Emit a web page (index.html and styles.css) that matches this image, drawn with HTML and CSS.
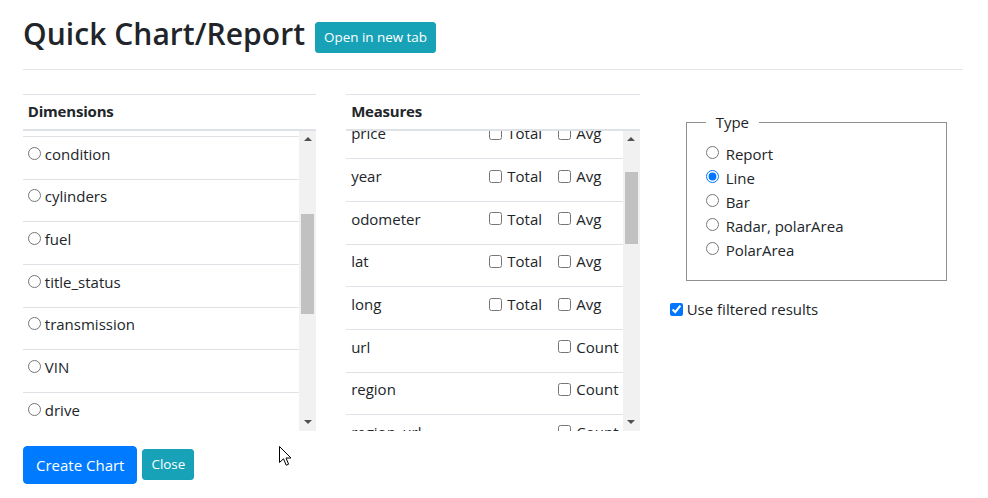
FILE: index.html
```html
<!DOCTYPE html>
<html lang="en">
<head>
<meta charset="utf-8">
<title>Quick Chart/Report</title>
<link rel="stylesheet" href="styles.css">
</head>
<body>
<div class="page">
  <div class="title-row">
    <h2 class="title">Quick Chart/Report</h2>
    <button class="btn btn-info btn-sm btn-open">Open in new tab</button>
  </div>
  <hr class="divider">

  <div class="cols">
    <div class="panel">
      <div class="panel-head">Dimensions</div>
      <div class="scroll">
        <div class="scroll-view">
          <div class="list list-dims">
            <div class="row"><label class="opt"><input type="radio" name="dim"><span>condition</span></label></div>
            <div class="row"><label class="opt"><input type="radio" name="dim"><span>cylinders</span></label></div>
            <div class="row"><label class="opt"><input type="radio" name="dim"><span>fuel</span></label></div>
            <div class="row"><label class="opt"><input type="radio" name="dim"><span>title_status</span></label></div>
            <div class="row"><label class="opt"><input type="radio" name="dim"><span>transmission</span></label></div>
            <div class="row"><label class="opt"><input type="radio" name="dim"><span>VIN</span></label></div>
            <div class="row"><label class="opt"><input type="radio" name="dim"><span>drive</span></label></div>
          </div>
        </div>
        <div class="sbar">
          <div class="sbtn"><span class="arrow-up"></span></div>
          <div class="strack"><div class="sthumb" style="margin-top:66px;height:100px"></div></div>
          <div class="sbtn"><span class="arrow-down"></span></div>
        </div>
      </div>
    </div>

    <div class="panel">
      <div class="panel-head">Measures</div>
      <div class="scroll">
        <div class="scroll-view">
          <div class="list list-measures">
            <div class="row mrow"><span class="cell">price</span><label class="cell opt"><input type="checkbox"><span>Total</span></label><label class="cell opt"><input type="checkbox"><span>Avg</span></label></div>
            <div class="row mrow"><span class="cell">year</span><label class="cell opt"><input type="checkbox"><span>Total</span></label><label class="cell opt"><input type="checkbox"><span>Avg</span></label></div>
            <div class="row mrow"><span class="cell">odometer</span><label class="cell opt"><input type="checkbox"><span>Total</span></label><label class="cell opt"><input type="checkbox"><span>Avg</span></label></div>
            <div class="row mrow"><span class="cell">lat</span><label class="cell opt"><input type="checkbox"><span>Total</span></label><label class="cell opt"><input type="checkbox"><span>Avg</span></label></div>
            <div class="row mrow"><span class="cell">long</span><label class="cell opt"><input type="checkbox"><span>Total</span></label><label class="cell opt"><input type="checkbox"><span>Avg</span></label></div>
            <div class="row mrow"><span class="cell">url</span><span class="cell"></span><label class="cell opt"><input type="checkbox"><span>Count</span></label></div>
            <div class="row mrow"><span class="cell">region</span><span class="cell"></span><label class="cell opt"><input type="checkbox"><span>Count</span></label></div>
            <div class="row mrow"><span class="cell">region_url</span><span class="cell"></span><label class="cell opt"><input type="checkbox"><span>Count</span></label></div>
          </div>
        </div>
        <div class="sbar">
          <div class="sbtn"><span class="arrow-up"></span></div>
          <div class="strack"><div class="sthumb" style="margin-top:24px;height:72px"></div></div>
          <div class="sbtn"><span class="arrow-down"></span></div>
        </div>
      </div>
    </div>

    <div class="panel side">
      <fieldset class="type-box">
        <legend class="type-legend">Type</legend>
        <label class="topt"><input type="radio" name="type"><span>Report</span></label>
        <label class="topt"><input type="radio" name="type" checked><span>Line</span></label>
        <label class="topt"><input type="radio" name="type"><span>Bar</span></label>
        <label class="topt"><input type="radio" name="type"><span>Radar, polarArea</span></label>
        <label class="topt"><input type="radio" name="type"><span>PolarArea</span></label>
      </fieldset>
      <label class="filter"><input type="checkbox" checked><span>Use filtered results</span></label>
    </div>
  </div>

  <div class="actions">
    <button class="btn btn-primary">Create Chart</button>
    <button class="btn btn-info btn-sm">Close</button>
  </div>
</div>

<svg class="cursor" width="13" height="21" viewBox="0 0 13 21" aria-hidden="true">
  <path d="M0.5 0.5 L0.5 16.5 L4.5 12.8 L7.2 19.2 L9.6 18.2 L7 12 L12 12 Z" fill="#ffffff" stroke="#000000" stroke-width="1" stroke-linejoin="miter"/>
</svg>
</body>
</html>
```

FILE: styles.css
```css
* { box-sizing: border-box; }

html, body {
  margin: 0;
  padding: 0;
  background: #ffffff;
}

body {
  font-family: "Open Sans", "Noto Sans", "Liberation Sans", sans-serif;
  font-size: 15px;
  line-height: 24px;
  color: #212529;
  position: relative;
  width: 988px;
  height: 498px;
  overflow: hidden;
}

.page {
  width: 940px;
  margin-left: 23px;
}

.title-row {
  display: flex;
  align-items: flex-start;
  gap: 10px;
  padding-top: 16px;
}

.title {
  margin: 0;
  font-size: 30px;
  line-height: 36px;
  font-weight: 600;
  letter-spacing: 0.05px;
}

.btn-open { margin-top: 6px; }

.btn {
  display: inline-block;
  font-family: inherit;
  font-weight: 400;
  color: #ffffff;
  border: 1px solid transparent;
  border-radius: 4px;
  padding: 6px 12px;
  font-size: 15px;
  line-height: 24px;
  cursor: pointer;
}

.btn-sm {
  padding: 4px 8px;
  font-size: 13.4px;
  line-height: 21px;
  border-radius: 3px;
}

.btn-info {
  background: #17a2b8;
  border-color: #17a2b8;
}

.btn-primary {
  background: #007bff;
  border-color: #007bff;
}

.divider {
  margin: 16px 0 0 0;
  border: 0;
  border-top: 1px solid rgba(0, 0, 0, 0.1);
  height: 0;
}

.cols {
  display: grid;
  grid-template-columns: repeat(3, 1fr);
  column-gap: 30px;
  margin-top: 24px;
}

.panel-head {
  border-top: 1px solid #dee2e6;
  border-bottom: 2px solid #dee2e6;
  padding: 4px 4.8px 5.6px 4.8px;
  font-weight: 700;
  line-height: 24px;
  letter-spacing: -0.2px;
}

.scroll {
  display: flex;
  height: 300px;
}

.scroll-view {
  flex: 1;
  overflow: hidden;
}

.list-dims { padding-top: 5.4px; }
.list-measures { margin-top: -15px; }

.row {
  height: 42.67px;
  border-top: 1px solid #dee2e6;
  padding: 4.8px 4.8px 0 4.8px;
  display: flex;
  align-items: flex-start;
  white-space: nowrap;
}

.mrow {
  display: grid;
  grid-template-columns: 138.2px 69px 1fr;
  padding-left: 0;
  padding-right: 0;
}

.cell {
  padding: 0 4.8px;
  display: flex;
  align-items: center;
  height: 24px;
  overflow: hidden;
}

.opt {
  display: flex;
  align-items: center;
  height: 24px;
}

.opt input {
  margin: 0 4px 1px 0;
  width: 13px;
  height: 13px;
  flex: none;
}

.mrow .opt input {
  margin: 0 5px 0 0;
}

.sbar {
  width: 17px;
  flex: none;
  background: #f1f1f1;
  display: flex;
  flex-direction: column;
}

.sbtn {
  height: 17px;
  flex: none;
  display: flex;
  align-items: center;
  justify-content: center;
}

.arrow-up {
  width: 0;
  height: 0;
  border-left: 4px solid transparent;
  border-right: 4px solid transparent;
  border-bottom: 4px solid #505050;
}

.arrow-down {
  width: 0;
  height: 0;
  border-left: 4px solid transparent;
  border-right: 4px solid transparent;
  border-top: 4px solid #505050;
}

.strack {
  flex: 1;
  display: flex;
  flex-direction: column;
  align-items: center;
}

.sthumb {
  width: 13px;
  background: #c1c1c1;
}

.type-box {
  margin: 16px 16px 0 16px;
  border: 1px solid #8f8f8f;
  padding: 8px 19px 18px 19px;
  min-width: 0;
}

.type-legend {
  padding: 0 10px;
  line-height: 24px;
  font-size: 15px;
  margin-top: -1px;
}

.topt {
  display: flex;
  align-items: center;
  height: 24px;
}

.topt input {
  margin: 0 7px 3px 0;
  width: 13px;
  height: 13px;
}

.filter {
  display: flex;
  align-items: center;
  height: 24px;
  margin-top: 16px;
}

.filter input {
  margin: 0 4px 0 0;
  width: 13px;
  height: 13px;
}

.actions {
  display: flex;
  align-items: center;
  gap: 5px;
  margin-top: 15.4px;
}

.cursor {
  position: absolute;
  left: 279px;
  top: 446px;
}
```
